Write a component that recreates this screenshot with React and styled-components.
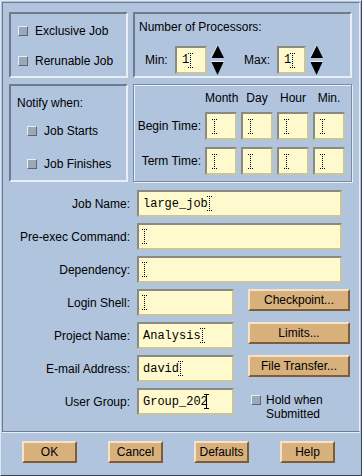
import React from 'react';
import styled, { createGlobalStyle } from 'styled-components';

const GlobalStyle = createGlobalStyle`
  body {
    margin: 0;
    background: #b0c4de;
    font-family: "Liberation Sans", Arial, sans-serif;
    font-size: 12px;
    color: #000;
  }
`;

const Window = styled.div`
  width: 362px;
  height: 476px;
  box-sizing: border-box;
  background: #b0c4de;
  border: 1px solid;
  border-color: #dfe7f1 #3c4250 #3c4250 #dfe7f1;
  display: flex;
  flex-direction: column;
`;

const Main = styled.div`
  height: 430px;
  box-sizing: border-box;
  margin: 1px 1px 0 1px;
  border: 1px solid;
  border-color: #6e7b8b #e8eef6 #6e7b8b #6e7b8b;
  padding: 9px 0 0 6px;
`;

const TopGrid = styled.div`
  display: grid;
  grid-template-columns: 119px 219px;
  grid-template-rows: 66px 98px;
  column-gap: 5px;
  row-gap: 6px;
`;

const Frame = styled.div`
  box-sizing: border-box;
  border: 2px solid;
  border-color: #6e7b8b #e8eef6 #e8eef6 #6e7b8b;
  padding: ${p => p.$pad || '0'};
  display: flex;
  flex-direction: column;
`;

const EtchedFrame = styled.div`
  box-sizing: border-box;
  border: 1px solid #7d8a9c;
  box-shadow: inset 1px 1px 0 #e8eef6, 1px 1px 0 #e8eef6;
  padding: 5px 0 0 1px;
`;

const CheckRow = styled.label`
  display: flex;
  align-items: center;
  gap: 7px;
  height: ${p => p.$h || 30}px;
  padding-left: ${p => p.$indent || 7}px;
`;

const Box = styled.span`
  width: 8px;
  height: 8px;
  flex: none;
  background: #9ba8b8;
  border: 1px solid;
  border-color: #e8eef6 #5a6578 #5a6578 #e8eef6;
`;

const Title = styled.div`
  height: ${p => p.$h}px;
  line-height: ${p => p.$h}px;
  padding-left: ${p => p.$indent}px;
`;

const ProcRow = styled.div`
  display: flex;
  align-items: center;
  padding-left: 10px;
  margin-top: 7px;
`;

const ProcLabel = styled.span`
  width: ${p => p.$w}px;
`;

const Field = styled.div`
  box-sizing: border-box;
  width: ${p => p.$w}px;
  height: ${p => p.$h || 27}px;
  background: #fffacd;
  border: 2px solid;
  border-color: #8a8a80 #c8c49e #c8c49e #8a8a80;
  display: flex;
  align-items: center;
  padding-left: ${p => p.$pl || 4}px;
  font-family: "Liberation Mono", "Courier New", monospace;
  font-size: 12px;
  ${p => p.$span ? 'grid-column: span 2;' : ''}
`;

const SpinWrap = styled.span`
  display: inline-flex;
  margin: 0 ${p => p.$mr || 0}px 0 4px;
`;

const TimeGrid = styled.div`
  display: grid;
  grid-template-columns: 66px repeat(4, 32px);
  grid-template-rows: 15px 28px 28px;
  column-gap: 4px;
  row-gap: 7px;
  align-items: center;
`;

const Head = styled.span`
  text-align: center;
  white-space: nowrap;
`;

const RowLabel = styled.span`
  text-align: right;
  white-space: nowrap;
`;

const Form = styled.div`
  display: grid;
  grid-template-columns: 121px 97px 102px;
  grid-auto-rows: 27px;
  column-gap: 7px;
  row-gap: 6px;
  margin-top: 8px;
  align-items: center;
`;

const Button = styled.button`
  box-sizing: border-box;
  width: ${p => p.$w}px;
  height: 22px;
  padding: 0;
  margin-left: ${p => p.$ml || 0}px;
  background: #d8b07c;
  border: 2px solid;
  border-color: #f6e2c6 #7d5c37 #7d5c37 #f6e2c6;
  font-family: "Liberation Sans", Arial, sans-serif;
  font-size: 12px;
  color: #000;
  align-self: start;
`;

const Hold = styled.div`
  display: flex;
  align-items: flex-start;
  gap: 5px;
  align-self: start;
  padding: 5px 0 0 10px;
  line-height: 14px;
  white-space: nowrap;

  ${Box} {
    margin-top: 2px;
  }
`;

const ButtonBar = styled.div`
  flex: 1;
  margin: 0 1px 1px 1px;
  border-top: 1px solid #e8eef6;
  display: flex;
  gap: 31px;
  padding: 8px 0 0 20px;
`;

const Cursor = ({ solid }) => (
  <svg width="5" height="15" viewBox="0 0 5 15" style={{ flex: 'none' }}>
    <path
      d="M0 0.5H5M2.5 0V15M0 14.5H5"
      stroke="#000"
      strokeWidth="1"
      strokeDasharray={solid ? 'none' : '1 1'}
      fill="none"
    />
  </svg>
);

const Spinner = () => (
  <svg width="13" height="30" viewBox="0 0 13 30">
    <polygon points="6.5,0 13,13 0,13" fill="#000" />
    <line x1="6.5" y1="0" x2="0" y2="13" stroke="#e8eef6" strokeWidth="1" />
    <polygon points="0,16 13,16 6.5,30" fill="#000" />
    <line x1="0" y1="16.5" x2="13" y2="16.5" stroke="#e8eef6" strokeWidth="1" />
  </svg>
);

const Text = ({ children, solid }) => (
  <>
    <span>{children}</span>
    <span style={{ marginLeft: solid ? -4 : -1, display: 'flex' }}>
      <Cursor solid={solid} />
    </span>
  </>
);

const Check = ({ children, h, indent }) => (
  <CheckRow $h={h} $indent={indent}>
    <Box />
    <span>{children}</span>
  </CheckRow>
);

const months = ['Month', 'Day', 'Hour', 'Min.'];

const App = () => (
  <>
    <GlobalStyle />
    <Window>
      <Main>
        <TopGrid>
          <Frame $pad="2px 0 0 0">
            <Check>Exclusive Job</Check>
            <Check>Rerunable Job</Check>
          </Frame>
          <Frame $pad="2px 0 0 0">
            <Title $h={22} $indent={4}>Number of Processors:</Title>
            <ProcRow>
              <ProcLabel $w={30}>Min:</ProcLabel>
              <Field $w={32} $h={28} $pl={5}><Text>1</Text></Field>
              <SpinWrap $mr={20}><Spinner /></SpinWrap>
              <ProcLabel $w={33}>Max:</ProcLabel>
              <Field $w={29} $h={28} $pl={5}><Text>1</Text></Field>
              <SpinWrap><Spinner /></SpinWrap>
            </ProcRow>
          </Frame>
          <Frame $pad="5px 0 0 0">
            <Title $h={24} $indent={6}>Notify when:</Title>
            <Check h={33} indent={16}>Job Starts</Check>
            <Check h={33} indent={16}>Job Finishes</Check>
          </Frame>
          <EtchedFrame>
            <TimeGrid>
              <span />
              {months.map(m => <Head key={m}>{m}</Head>)}
              <RowLabel>Begin Time:</RowLabel>
              {months.map(m => <Field key={m} $w={32} $h={28} $pl={5}><Cursor /></Field>)}
              <RowLabel>Term Time:</RowLabel>
              {months.map(m => <Field key={m} $w={32} $h={28} $pl={5}><Cursor /></Field>)}
            </TimeGrid>
          </EtchedFrame>
        </TopGrid>

        <Form>
          <RowLabel>Job Name:</RowLabel>
          <Field $w={205} $span $pl={4}><Text>large_job</Text></Field>

          <RowLabel>Pre-exec Command:</RowLabel>
          <Field $w={205} $span $pl={3}><Cursor /></Field>

          <RowLabel>Dependency:</RowLabel>
          <Field $w={205} $span $pl={3}><Cursor /></Field>

          <RowLabel>Login Shell:</RowLabel>
          <Field $w={97} $pl={3}><Cursor /></Field>
          <Button $w={102} $ml={7}>Checkpoint...</Button>

          <RowLabel>Project Name:</RowLabel>
          <Field $w={97}><Text>Analysis</Text></Field>
          <Button $w={102} $ml={7}>Limits...</Button>

          <RowLabel>E-mail Address:</RowLabel>
          <Field $w={97}><Text>david</Text></Field>
          <Button $w={102} $ml={7}>File Transfer...</Button>

          <RowLabel>User Group:</RowLabel>
          <Field $w={97}><Text solid>Group_202</Text></Field>
          <Hold>
            <Box />
            <span>Hold when<br />Submitted</span>
          </Hold>
        </Form>
      </Main>
      <ButtonBar>
        <Button $w={55}>OK</Button>
        <Button $w={55}>Cancel</Button>
        <Button $w={55}>Defaults</Button>
        <Button $w={55}>Help</Button>
      </ButtonBar>
    </Window>
  </>
);

export default App;
